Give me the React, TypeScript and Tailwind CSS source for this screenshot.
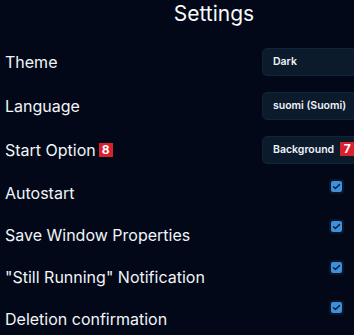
import React from 'react';

interface SelectRow {
    label: string;
    value: string;
    labelBadge?: string;
    valueBadge?: string;
}

interface CheckRow {
    label: string;
    offset: string;
}

const selectRows: SelectRow[] = [
    { label: 'Theme', value: 'Dark' },
    { label: 'Language', value: 'suomi (Suomi)' },
    { label: 'Start Option', value: 'Background', labelBadge: '8', valueBadge: '7' },
];

const checkRows: CheckRow[] = [
    { label: 'Autostart', offset: 'mt-[7px]' },
    { label: 'Save Window Properties', offset: 'mt-[5px]' },
    { label: '"Still Running" Notification', offset: 'mt-[4px]' },
    { label: 'Deletion confirmation', offset: 'mt-[2px]' },
];

const Badge: React.FC<{ text: string }> = ({ text }) => (
    <span className="inline-flex items-center justify-center w-[14px] h-[14px] bg-[#d8212f] text-white text-[12px] font-bold leading-none">
        {text}
    </span>
);

const Checkbox: React.FC<{ className: string }> = ({ className }) => (
    <div className={`${className} w-[15px] h-[15px] rounded-[3px] bg-[#0a172b] flex items-center justify-center`}>
        <div className="w-[11px] h-[11px] rounded-[2px] bg-[#3d90d9] flex items-center justify-center">
            <svg width="9" height="9" viewBox="0 0 24 24" fill="none" stroke="#0b2442" strokeWidth="4" strokeLinecap="round" strokeLinejoin="round">
                <path d="M4 12.5l5 5L20 7" />
            </svg>
        </div>
    </div>
);

const App: React.FC = () => {
    return (
        <div className="w-[354px] h-[335px] overflow-hidden bg-[#020817] font-['Inter',sans-serif]">
            <div className="w-[428px] flex flex-col">
                <h1 className="h-[40px] text-center text-[21px] text-[#f8fafc] leading-[28px]">
                    Settings
                </h1>
                {selectRows.map((row) => (
                    <div key={row.label} className="h-[44px] flex items-center justify-between pl-[5px]">
                        <div className="flex items-center gap-[3px] text-[16px] text-[#f1f5f9]">
                            <span>{row.label}</span>
                            {row.labelBadge && <Badge text={row.labelBadge} />}
                        </div>
                        <div className="relative w-[166px] h-[28px] rounded-[5px] bg-[#0c1b2c] border border-[#10233a] flex items-center pl-[10px] text-[10.5px] font-semibold text-[#eef2f7]">
                            <span>{row.value}</span>
                            {row.valueBadge && (
                                <span className="ml-[6px]">
                                    <Badge text={row.valueBadge} />
                                </span>
                            )}
                        </div>
                    </div>
                ))}
                {checkRows.map((row) => (
                    <div key={row.label} className="h-[42px] flex justify-between pl-[5px] pr-[84px]">
                        <span className="self-center text-[16px] text-[#f1f5f9]">{row.label}</span>
                        <Checkbox className={`self-start ${row.offset}`} />
                    </div>
                ))}
            </div>
        </div>
    );
};

export default App;
